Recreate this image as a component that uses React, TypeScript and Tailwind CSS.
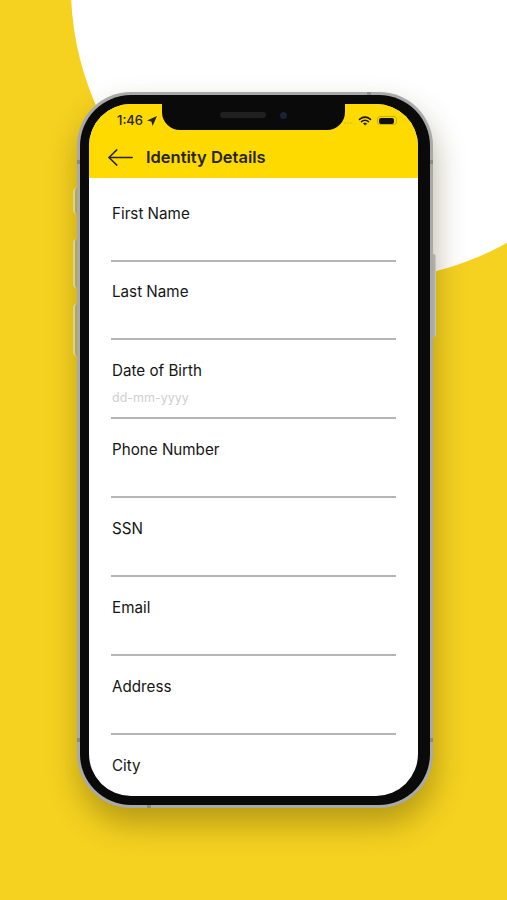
import React from "react";

const fields = ["First Name", "Last Name", "Date of Birth", "Phone Number", "SSN", "Email", "Address"];

function Field({ label }: { label: string }) {
  return (
    <div className="flex h-[78.9px] flex-col">
      <div className="ml-[1px] mt-[18px] h-[20px] text-[15.2px] leading-[20px] text-[#151515]">{label}</div>
      <div className="ml-[1px] h-[36px] pt-[9px] text-[12.5px] leading-[16px] text-[#cfcfcf]">
        {label === "Date of Birth" ? "dd-mm-yyyy" : ""}
      </div>
      <div className="h-[2px] bg-[#b5b5b5]" />
    </div>
  );
}

export default function App() {
  return (
    <div className="relative h-[900px] w-[507px] overflow-hidden bg-[#f5d120] font-['Inter',sans-serif]">
      <div className="absolute left-[71px] top-[-306px] h-[586px] w-[586px] rounded-full bg-white" />

      <div className="relative ml-[77px] mt-[92px] inline-block">
        {/* side buttons */}
        <div className="absolute left-[-4px] top-[96px] h-[26px] w-[4px] rounded-l-sm border-l-2 border-[#f1e9b4] bg-[#cdbd55]" />
        <div className="absolute left-[-4px] top-[147px] h-[49px] w-[4px] rounded-l-sm border-l-2 border-[#f1e9b4] bg-[#cdbd55]" />
        <div className="absolute left-[-4px] top-[212px] h-[52px] w-[4px] rounded-l-sm border-l-2 border-[#f1e9b4] bg-[#cdbd55]" />
        <div className="absolute right-[-3px] top-[162px] h-[83px] w-[3px] rounded-r-sm border-r border-[#e5e5e5] bg-[#c9c9c9]" />

        <div className="relative h-[716px] w-[356px] rounded-[54px] bg-[#a9a9a9] p-[3px] shadow-[2px_16px_30px_rgba(70,60,0,0.36)]">
          {/* antenna marks */}
          <div className="absolute left-[290px] top-0 h-[3px] w-[4px] bg-[#8a8a8a]" />
          <div className="absolute left-[70px] bottom-0 h-[3px] w-[4px] bg-[#8a8a8a]" />
          <div className="absolute left-0 top-[68px] h-[4px] w-[3px] bg-[#8a8a8a]" />
          <div className="absolute right-0 top-[68px] h-[4px] w-[3px] bg-[#8a8a8a]" />
          <div className="absolute left-0 bottom-[66px] h-[4px] w-[3px] bg-[#8a8a8a]" />
          <div className="absolute right-0 bottom-[66px] h-[4px] w-[3px] bg-[#8a8a8a]" />

          <div className="h-[710px] w-[350px] rounded-[51px] bg-[#0a0a0a] p-[9px_12px_12px_9px]">
            <div className="relative h-[692px] w-[329px] overflow-hidden rounded-[42px] bg-white">
              {/* notch */}
              <div className="absolute left-[73px] top-[-1px] flex h-[27px] w-[183px] items-center justify-center gap-[14px] rounded-b-[18px] bg-[#0a0a0a] pb-[3px]">
                <div className="h-[6px] w-[46px] rounded-full bg-[#202020]" />
                <div className="h-[7px] w-[7px] rounded-full bg-[#18233a]" />
              </div>

              {/* header */}
              <div className="h-[74px] bg-[#ffda00]">
                <div className="flex h-[32px] items-center justify-between pl-[28px] pr-[21px] pt-[1px]">
                  <div className="flex items-center gap-[4px] text-[13px] font-medium leading-none text-[#26241a]">
                    <span>1:46</span>
                    <svg width="10" height="10" viewBox="0 0 10 10" fill="#26241a">
                      <path d="M10 0 5.6 10 4.4 5.6 0 4.4z" />
                    </svg>
                  </div>
                  <div className="flex items-center gap-[5px]">
                    <div className="mr-[1px] mt-[5px] flex gap-[1px]">
                      <div className="h-[2px] w-[2px] rounded-full bg-[#e3c50a]" />
                      <div className="h-[2px] w-[2px] rounded-full bg-[#e3c50a]" />
                      <div className="h-[2px] w-[2px] rounded-full bg-[#e3c50a]" />
                    </div>
                    <svg width="14" height="10" viewBox="0 0 13 10" fill="none" stroke="#141414" strokeLinecap="round">
                      <path d="M1 3.4C4.4.6 8.6.6 12 3.4" strokeWidth="1.5" />
                      <path d="M3 5.6C5.2 3.9 7.8 3.9 10 5.6" strokeWidth="1.5" />
                      <path d="M6.5 9 5 7.5C5.9 6.9 7.1 6.9 8 7.5z" fill="#141414" strokeWidth="0.6" />
                    </svg>
                    <div className="flex h-[9px] w-[20px] items-center rounded-[3px] border border-[#c9b000] p-[0.5px]">
                      <div className="h-full w-[15px] rounded-[2px] bg-[#111]" />
                    </div>
                  </div>
                </div>
                <div className="flex h-[42px] items-center pl-[19px]">
                  <svg width="25" height="17" viewBox="0 0 25 17" fill="none" stroke="#26241a" strokeWidth="1.5" strokeLinecap="round" strokeLinejoin="round">
                    <path d="M24.2 8.5H1" />
                    <path d="M8.8.9 1 8.5l7.8 7.6" />
                  </svg>
                  <div className="ml-[13px] text-[16.5px] font-semibold leading-none text-[#26241a]">Identity Details</div>
                </div>
              </div>

              {/* form */}
              <div className="px-[22px]">
                <div className="mt-[7.6px]">
                  {fields.map((f) => (
                    <Field key={f} label={f} />
                  ))}
                </div>
                <div className="ml-[1px] mt-[18px] text-[15.2px] leading-[20px] text-[#151515]">City</div>
              </div>
            </div>
          </div>
        </div>
      </div>
    </div>
  );
}
